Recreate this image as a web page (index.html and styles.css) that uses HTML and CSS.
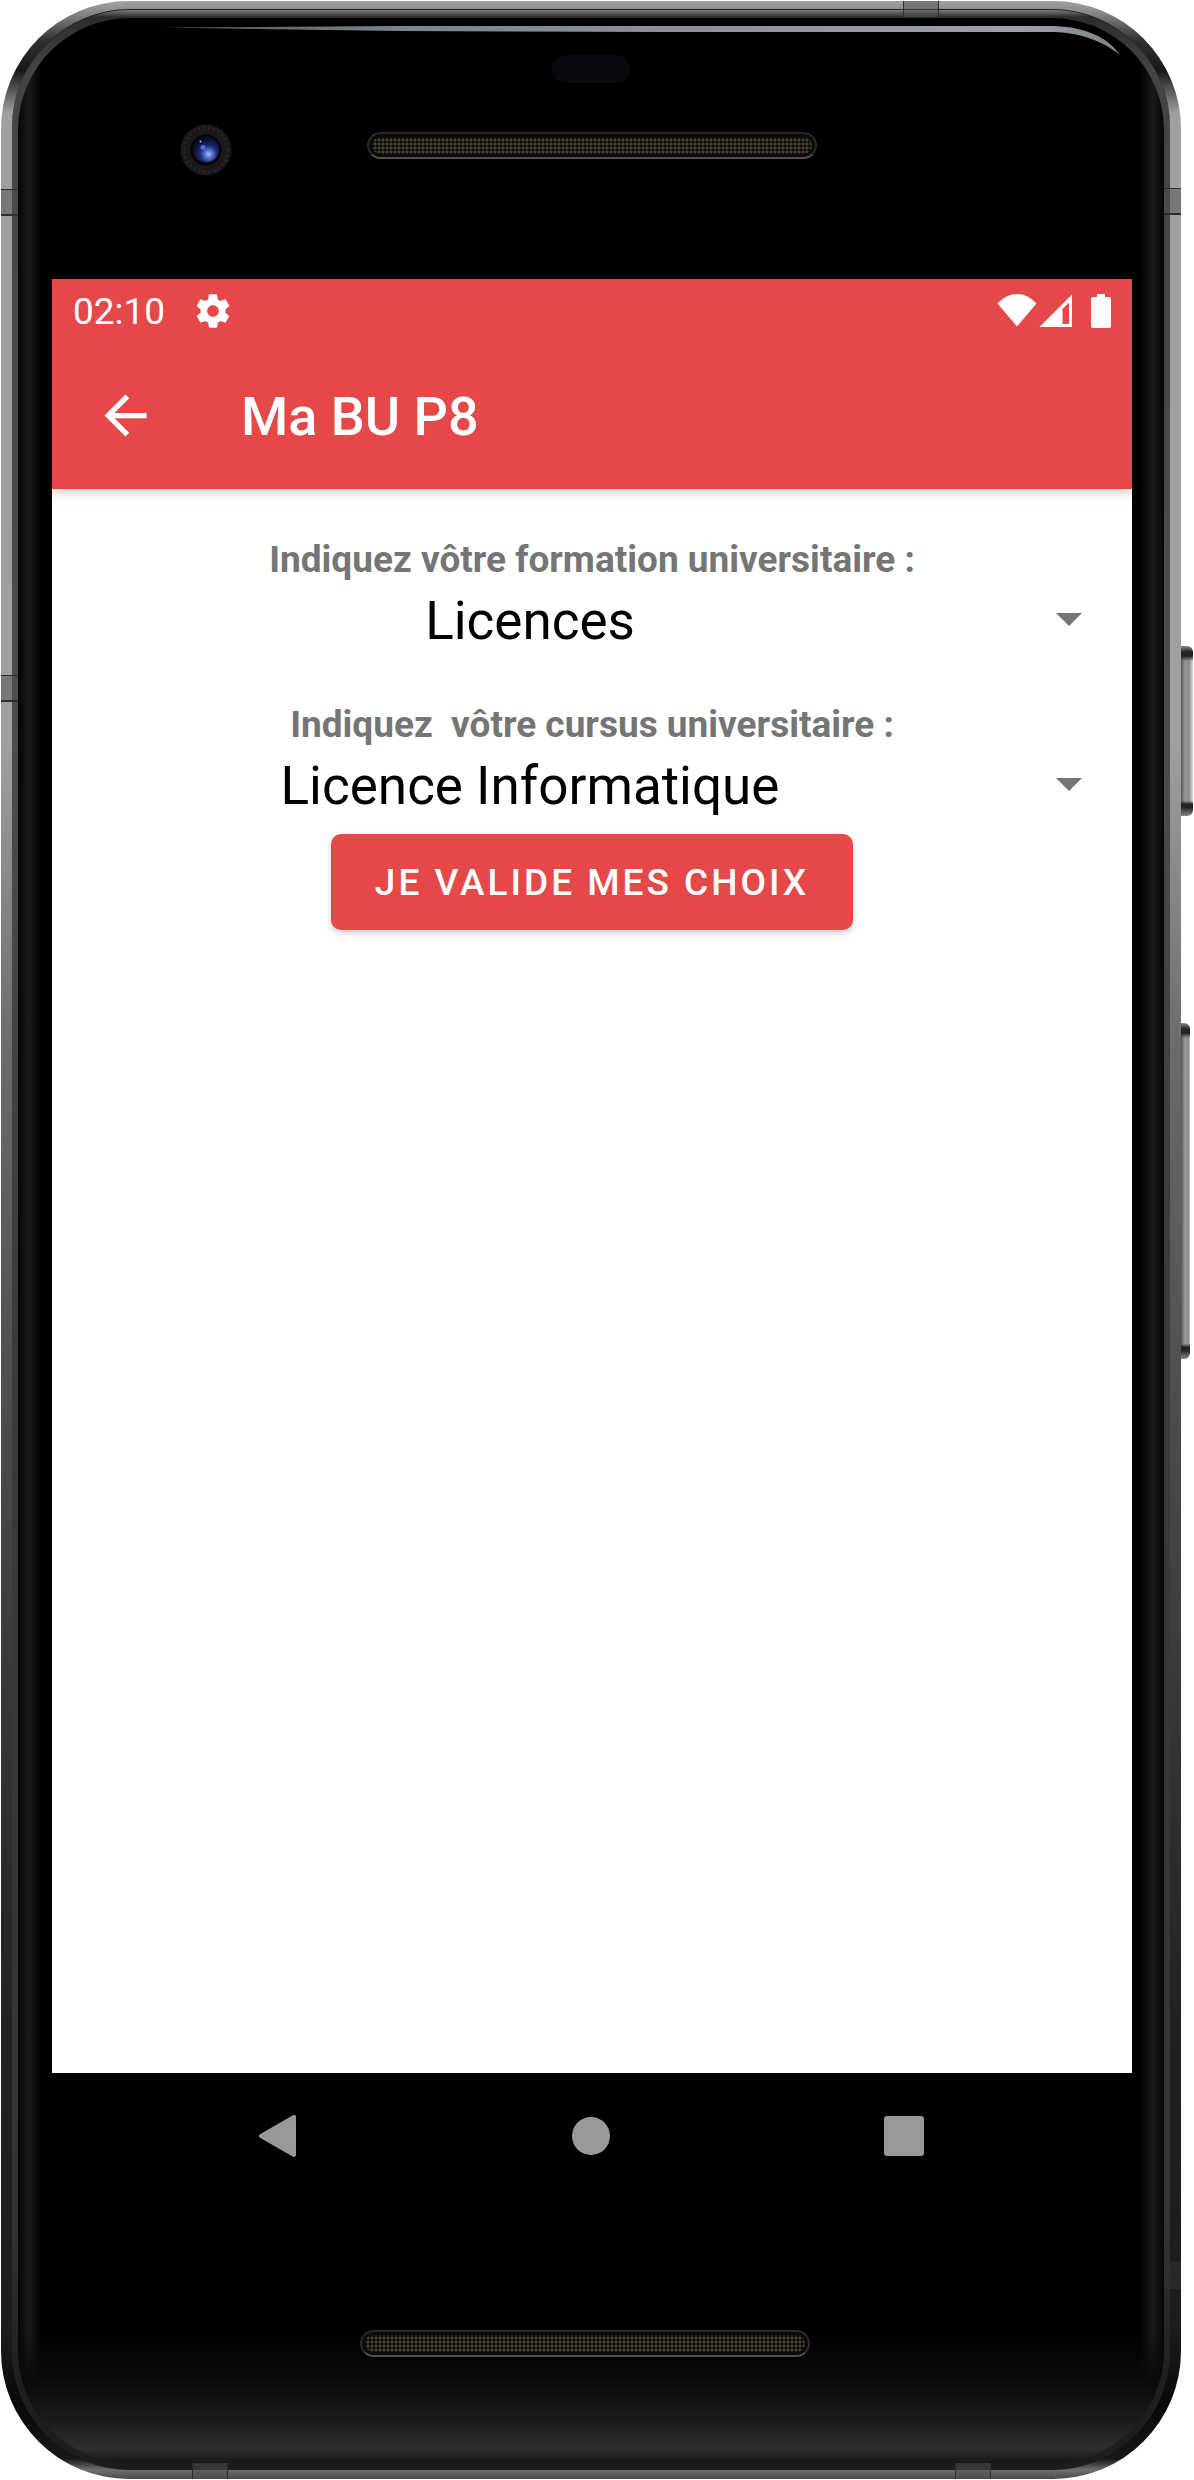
FILE: index.html
```html
<!DOCTYPE html>
<html lang="fr">
<head>
<meta charset="utf-8">
<meta name="viewport" content="width=device-width, initial-scale=1">
<title>Ma BU P8</title>
<link rel="stylesheet" href="styles.css">
</head>
<body>
<div class="phone">
  <span class="side-key side-key-power"></span>
  <span class="side-key side-key-volume"></span>
  <div class="rim">
    <div class="glass">
      <svg class="glare" viewBox="0 0 962 30" preserveAspectRatio="none" aria-hidden="true">
        <defs>
          <linearGradient id="glare" x1="0" x2="1" y1="0" y2="0">
            <stop offset="0" stop-color="#4a5254"/>
            <stop offset=".25" stop-color="#7d8587"/>
            <stop offset=".9" stop-color="#9aa2a3"/>
            <stop offset="1" stop-color="#7b8384"/>
          </linearGradient>
        </defs>
        <path fill="url(#glare)" d="M0 1.500L240 0H890C925 0 949 10 962 29C943 14 921 6 890 6H500L240 5Z"/>
      </svg>
      <div class="bezel-top">
        <span class="sensor"></span>
        <div class="ear-row">
          <svg class="camera" viewBox="0 0 52 52" aria-hidden="true">
            <defs>
              <radialGradient id="lens" cx=".6" cy=".68" r=".6">
                <stop offset="0" stop-color="#a9bdfa"/>
                <stop offset=".25" stop-color="#5a72d0"/>
                <stop offset=".55" stop-color="#1e2a70"/>
                <stop offset="1" stop-color="#090d26"/>
              </radialGradient>
            </defs>
            <circle cx="26" cy="26" r="25.500" fill="#1b1818"/>
            <circle cx="26" cy="26" r="22" fill="none" stroke="#2a2626" stroke-width="3" stroke-dasharray="2 3"/>
            <circle cx="26" cy="26" r="15.500" fill="#050508"/>
            <circle cx="26" cy="25.500" r="13" fill="url(#lens)"/>
            <circle cx="23" cy="23.500" r="2.500" fill="#4f6fdc"/>
            <circle cx="20.500" cy="17.500" r="1" fill="#9fb4ff"/>
          </svg>
          <span class="speaker"></span>
        </div>
      </div>

      <div class="screen">
        <header class="header">
          <div class="status-bar">
            <div class="status-group">
              <span class="clock">02:10</span>
              <svg class="gear" viewBox="0 0 24 24" aria-hidden="true"><path fill="#fff" d="M19.430 12.980c.04-.32.070-.64.070-.98s-.03-.66-.07-.98l2.110-1.650c.19-.15.240-.42.120-.64l-2-3.460c-.12-.22-.39-.3-.61-.22l-2.490 1c-.52-.4-1.080-.73-1.690-.98l-.38-2.650C14.460 2.180 14.250 2 14 2h-4c-.25 0-.46.180-.49.420l-.38 2.650c-.61.250-1.170.590-1.690.980l-2.490-1c-.23-.09-.49 0-.61.220l-2 3.460c-.13.220-.07.490.120.640l2.110 1.650c-.04.320-.07.650-.07.980s.03.660.070.980l-2.110 1.650c-.19.150-.24.420-.12.640l2 3.460c.12.220.390.300.610.220l2.490-1c.52.400 1.080.730 1.690.980l.38 2.650c.03.240.240.420.490.420h4c.25 0 .46-.18.490-.42l.38-2.650c.61-.25 1.170-.59 1.690-.98l2.490 1c.23.090.49 0 .61-.22l2-3.460c.12-.22.070-.49-.12-.64l-2.110-1.650zM12 15.500c-1.930 0-3.500-1.570-3.500-3.500s1.570-3.500 3.500-3.500 3.500 1.570 3.500 3.500-1.570 3.500-3.500 3.500z"/></svg>
            </div>
            <svg class="indicators" viewBox="0 0 116 36" aria-hidden="true">
              <path fill="#fff" d="M20 33.500L.500 10.500Q9 1 20 1T39.500 10.500Z"/>
              <path fill="#fff" fill-rule="evenodd" d="M75 1.500V34H42.500ZM72 9.500L65.500 16V31H72Z"/>
              <path fill="#fff" d="M100 1h8v3h4q2 0 2 2v27q0 2-2 2H96q-2 0-2-2V6q0-2 2-2h4Z"/>
            </svg>
          </div>
          <div class="toolbar">
            <button class="back" type="button" aria-label="Retour">
              <svg viewBox="0 0 24 24" aria-hidden="true"><path fill="#fff" d="M20 11H7.830l5.590-5.590L12 4l-8 8 8 8 1.410-1.410L7.830 13H20v-2z"/></svg>
            </button>
            <h1 class="title">Ma BU P8</h1>
          </div>
        </header>

        <form class="form">
          <div class="field">
            <label class="label" for="formation">Indiquez vôtre formation universitaire :</label>
            <div class="spinner">
              <select class="select" id="formation"><option>Licences</option></select>
              <svg class="caret" viewBox="0 0 26 13" aria-hidden="true"><path fill="#757575" d="M0 0h26L13 13z"/></svg>
            </div>
          </div>
          <div class="field">
            <label class="label" for="cursus">Indiquez&nbsp; vôtre cursus universitaire :</label>
            <div class="spinner">
              <select class="select" id="cursus"><option>Licence Informatique</option></select>
              <svg class="caret" viewBox="0 0 26 13" aria-hidden="true"><path fill="#757575" d="M0 0h26L13 13z"/></svg>
            </div>
          </div>
          <button class="submit" type="button">JE VALIDE MES CHOIX</button>
        </form>
      </div>

      <nav class="nav">
        <button class="nav-key" type="button" aria-label="Précédent">
          <svg viewBox="0 0 42 42" aria-hidden="true"><path fill="#999" stroke="#999" stroke-width="4" stroke-linejoin="round" d="M4 21L37 2V40Z"/></svg>
        </button>
        <button class="nav-key" type="button" aria-label="Accueil">
          <svg viewBox="0 0 42 42" aria-hidden="true"><circle cx="21" cy="21" r="19" fill="#999"/></svg>
        </button>
        <button class="nav-key" type="button" aria-label="Applications récentes">
          <svg viewBox="0 0 42 42" aria-hidden="true"><rect x="1" y="1" width="40" height="40" rx="3" fill="#999"/></svg>
        </button>
      </nav>

      <div class="bezel-bottom">
        <span class="speaker"></span>
      </div>
    </div>
  </div>
  <span class="band band-side band-left-high"></span>
  <span class="band band-side band-left-low"></span>
  <span class="band band-side band-right-high"></span>
  <span class="band band-side band-right-low"></span>
  <span class="band band-edge band-top"></span>
  <span class="band band-edge band-bottom-left"></span>
  <span class="band band-edge band-bottom-right"></span>
</div>
</body>
</html>
```

FILE: styles.css
```css
* {
  box-sizing: border-box;
}

body {
  margin: 0;
  padding: 1px 13px 1px 1px;
  background: #fff;
  font-family: Roboto, "Liberation Sans", sans-serif;
}

button {
  margin: 0;
  border: 0;
  background: none;
  font: inherit;
}

svg {
  display: block;
}

/* Phone body */
.phone {
  position: relative;
  display: flex;
  min-height: calc(100vh - 2px);
  padding: 8px 11px 9px;
  border-radius: 128px;
  background: linear-gradient(#a0a0a0 0, #8c8c8c 10px, #303030 40px, #181818 70px, #a0a0a0 112px, #a0a0a0 30%, #6c6c6c 42%, #505050 55%, #383838 68%, #202020 82%, #1c1c1c 94%, #080808 97%, #181818 calc(100% - 20px), #707070 calc(100% - 9px), #484848 100%);
}

.rim {
  display: flex;
  flex: 1;
  min-width: 0;
  padding: 8px 6px 7px;
  border-top: 1px solid #222;
  border-radius: 118px;
  background: linear-gradient(#7c7c7c 0, #2c2c2c 7px, #444 60px, #4c4c4c 30%, #3c3c3c 50%, #333 90%, #202020 96%, #1c1c1c 100%);
}

.glass {
  position: relative;
  display: flex;
  flex: 1;
  flex-direction: column;
  min-width: 0;
  border-radius: 112px;
  background:
    linear-gradient(transparent calc(100% - 130px), #0a0a0a calc(100% - 84px), #1a1a1a calc(100% - 44px), #2e2e2e calc(100% - 14px), #161616 100%),
    linear-gradient(90deg, #050505 0, #1a1a1a 11px, #000 24px, #000 calc(100% - 24px), #1a1a1a calc(100% - 11px), #050505 100%);
}

.glare {
  position: absolute;
  top: 8px;
  right: 44px;
  left: 141px;
  width: calc(100% - 185px);
  height: 30px;
}

.side-key {
  position: absolute;
  left: 100%;
  border-radius: 0 6px 6px 0;
  background:
    linear-gradient(#888 0, #222 6px, #222 10px, transparent 15px, transparent calc(100% - 15px), #222 calc(100% - 12px), #222 calc(100% - 9px), #888 100%),
    linear-gradient(90deg, #555 0, #999 4px, #8a8a8a 8px, #ddd 100%);
}

.side-key-power {
  top: 645px;
  width: 12px;
  height: 170px;
}

.side-key-volume {
  top: 1022px;
  width: 9px;
  height: 336px;
}

.band {
  position: absolute;
  border: 0 solid #2c2c2c;
  background: rgba(80, 80, 80, .5);
}

.band-side {
  width: 17px;
  height: 27px;
  border-width: 1px 0 2px;
}

.band-edge {
  width: 36px;
  height: 16px;
  border-width: 0 1px;
}

.band-left-high { top: 188px; left: 0; }
.band-left-low { top: 674px; left: 0; }
.band-right-high { top: 187px; right: 0; }
.band-right-low { right: 0; bottom: 190px; background: rgba(50, 50, 50, .5); }
.band-top { top: 0; right: 242px; }
.band-bottom-left { bottom: 0; left: 191px; }
.band-bottom-right { right: 190px; bottom: 0; }

.bezel-top {
  display: flex;
  flex-direction: column;
  gap: 41px;
  height: 261px;
  padding-top: 37px;
}

.sensor {
  align-self: center;
  width: 78px;
  height: 28px;
  border-radius: 14px;
  background: #08090c;
}

.ear-row {
  display: grid;
  grid-template-columns: 1fr 450px 1fr;
  align-items: center;
  padding-left: 2px;
}

.camera {
  width: 52px;
  height: 52px;
  margin-left: 160px;
}

.speaker {
  width: 450px;
  height: 27px;
  margin-bottom: 10px;
  border: 2px solid #2a2928;
  border-bottom-color: #55504c;
  border-radius: 14px;
  background: radial-gradient(circle, #4a4438 1px, #0c0b0a 2px) 0 0 / 4px 4px;
  box-shadow: inset 0 0 0 3px #0c0b0b;
}

/* App screen */
.screen {
  flex: 1;
  margin: 0 32px 0 34px;
  background: #fff;
}

.header {
  background: #e54848;
  box-shadow: 0 2px 12px rgba(0, 0, 0, .25);
  clip-path: inset(0 0 -20px);
  color: #fff;
}

.status-bar {
  display: flex;
  align-items: center;
  justify-content: space-between;
  height: 63px;
  padding: 0 19px 0 21px;
}

.status-group {
  display: flex;
  align-items: center;
  gap: 28px;
}

.clock {
  padding-top: 2px;
  font-size: 37px;
  line-height: 43px;
}

.gear {
  width: 40px;
  height: 40px;
}

.indicators {
  width: 116px;
  height: 36px;
}

.toolbar {
  display: flex;
  align-items: center;
  gap: 84px;
  height: 147px;
  padding: 0 42px;
}

.back {
  width: 63px;
  height: 63px;
  padding: 0;
}

.title {
  margin: 0;
  padding-top: 2px;
  font-size: 54px;
  font-weight: 500;
  line-height: 62px;
}

.form {
  display: flex;
  flex-direction: column;
  align-items: center;
  padding: 49px 0;
}

.field {
  display: flex;
  flex-direction: column;
  gap: 9px;
  width: 100%;
}

.field + .field {
  margin-top: 51px;
}

.label {
  color: #757575;
  font-size: 37px;
  font-weight: 700;
  line-height: 43px;
  text-align: center;
}

.spinner {
  display: grid;
  grid-template-columns: 1fr;
  align-items: center;
}

.select {
  grid-area: 1 / 1;
  width: 100%;
  height: 62px;
  margin: 0;
  padding: 0 124px 0 0;
  border: 0;
  appearance: none;
  background: none;
  color: #000;
  font: 53px/62px Roboto, "Liberation Sans", sans-serif;
  text-align: center;
  text-align-last: center;
}

.caret {
  grid-area: 1 / 1;
  justify-self: end;
  width: 26px;
  height: 13px;
  margin: 0 50px 3px 0;
  pointer-events: none;
}

.submit {
  height: 96px;
  margin-top: 17px;
  padding: 0 44px;
  border-radius: 10px;
  background: #e54848;
  box-shadow: 0 3px 6px rgba(0, 0, 0, .2);
  color: #fff;
  font-size: 37px;
  font-weight: 500;
  letter-spacing: 3px;
  line-height: 43px;
}

/* System navigation */
.nav {
  display: flex;
  justify-content: center;
  height: 126px;
}

.nav-key {
  display: flex;
  align-items: center;
  justify-content: center;
  width: 313px;
  padding: 0;
}

.nav-key svg {
  width: 42px;
  height: 42px;
}

.bezel-bottom {
  display: flex;
  flex-direction: column;
  align-items: center;
  height: 264px;
  padding: 131px 12px 0 0;
}
```
